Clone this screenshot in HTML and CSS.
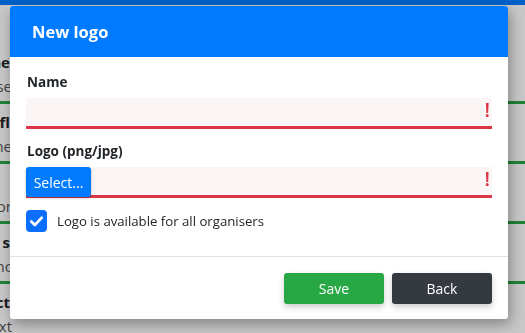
FILE: index.html
```html
<!DOCTYPE html>
<html>
<head>
<meta charset="utf-8">
<link rel="stylesheet" href="styles.css">
</head>
<body>
<div class="page">
  <div class="navbar"></div>
  <div class="bg-form">
    <div class="bg-group"><div class="bg-label">Name</div><div class="bg-input"><span class="bg-text">Base</span></div></div>
    <div class="bg-group"><div class="bg-label">Is fl</div><div class="bg-input"><span class="bg-text">Name</span></div></div>
    <div class="bg-group"><div class="bg-label">&nbsp;</div><div class="bg-input"><span class="bg-text">Color</span></div></div>
    <div class="bg-group"><div class="bg-label">Is s</div><div class="bg-input"><span class="bg-text">Finnc</span></div></div>
    <div class="bg-group"><div class="bg-label">Contact</div><div class="bg-input"><span class="bg-text">Text</span></div></div>
  </div>
</div>
<div class="backdrop"></div>
<div class="modal">
  <div class="modal-header">New logo</div>
  <div class="modal-body">
    <div class="field">
      <label class="field-label">Name</label>
      <div class="input invalid"><span class="bang">!</span></div>
    </div>
    <div class="field">
      <label class="field-label">Logo (png/jpg)</label>
      <div class="input invalid file">
        <span class="select-btn">Select...</span>
        <span class="bang">!</span>
      </div>
    </div>
    <div class="check-row">
      <span class="checkbox">
        <svg width="22" height="22" viewBox="0 0 22 22"><path d="M5.5 11.5 L9.3 15.2 L16.5 7.5" fill="none" stroke="#fff" stroke-width="2.8" stroke-linecap="round" stroke-linejoin="round"/></svg>
      </span>
      <span class="check-text">Logo is available for all organisers</span>
    </div>
  </div>
  <div class="modal-footer">
    <button class="btn btn-save">Save</button>
    <button class="btn btn-back">Back</button>
  </div>
</div>
</body>
</html>
```
FILE: styles.css
```css
html, body {
  margin: 0;
  padding: 0;
  width: 525px;
  height: 333px;
  overflow: hidden;
  background: #fff;
  font-family: "Open Sans", "Noto Sans", sans-serif;
  color: #212529;
}
.page {
  width: 525px;
}
.navbar {
  height: 5px;
  background: #007bff;
}
.bg-form {
  padding-top: 47px;
  width: 525px;
}
.bg-group {
  height: 60px;
  display: flex;
  flex-direction: column;
}
.bg-label {
  font-weight: bold;
  font-size: 15px;
  line-height: 20px;
  height: 22px;
  width: 10px;
  text-align: right;
  white-space: nowrap;
  direction: rtl;
}
.bg-input {
  font-size: 15px;
  line-height: 24px;
  color: #555;
  border-bottom: 3px solid #28a745;
  height: 27px;
}
.bg-text {
  display: block;
  width: 12px;
  white-space: nowrap;
  direction: rtl;
  text-align: right;
}
.backdrop {
  position: fixed;
  inset: 0;
  background: rgba(0, 0, 0, 0.22);
}
.modal {
  position: fixed;
  left: 10px;
  top: 6px;
  width: 498px;
  height: 313px;
  background: #fff;
  border-radius: 3px;
  overflow: hidden;
  box-shadow: 2px 5px 14px rgba(0, 0, 0, 0.35);
  display: flex;
  flex-direction: column;
}
.modal-header {
  height: 51px;
  background: #007bff;
  color: #fff;
  font-weight: bold;
  font-size: 16.5px;
  display: flex;
  align-items: center;
  padding-left: 22px;
  flex-shrink: 0;
}
.modal-body {
  padding: 15px 16px 0 16px;
  height: 184px;
  border-bottom: 1px solid #dee2e6;
}
.field {
  display: flex;
  flex-direction: column;
  margin-bottom: 12px;
}
.field-label {
  font-weight: bold;
  font-size: 13.5px;
  line-height: 21px;
  padding-left: 1px;
  margin-bottom: 5px;
}
.input {
  position: relative;
  height: 28px;
  background: #fcf5f5;
  border-bottom: 3px solid #dc3545;
  display: flex;
  align-items: stretch;
}
.bang {
  position: absolute;
  right: 2px;
  top: 1px;
  color: #dc3545;
  font-size: 20px;
  font-weight: 600;
  line-height: 22px;
}
.select-btn {
  background: #007bff;
  color: #fff;
  font-size: 14px;
  width: 65px;
  height: 30px;
  display: flex;
  align-items: center;
  justify-content: center;
  border-radius: 3px;
  box-shadow: 0 1px 3px rgba(0, 0, 0, 0.25);
  position: relative;
  z-index: 1;
}
.check-row {
  display: flex;
  align-items: center;
  margin-top: 1px;
}
.checkbox {
  width: 21px;
  height: 22px;
  border-radius: 4px;
  background: #0b6efd;
  display: flex;
  align-items: center;
  justify-content: center;
}
.checkbox svg {
  display: block;
}
.check-text {
  font-size: 13.2px;
  margin-left: 10px;
  color: #212529;
}
.modal-footer {
  display: flex;
  justify-content: flex-end;
  gap: 8px;
  padding: 16px 16px 0 0;
}
.btn {
  width: 100px;
  height: 31px;
  border: none;
  border-radius: 3px;
  color: #fff;
  font-family: "Open Sans", "Noto Sans", sans-serif;
  font-size: 14px;
  box-shadow: 0 3px 6px rgba(0, 0, 0, 0.2);
}
.btn-save {
  background: #28a745;
}
.btn-back {
  background: #343a40;
}
```
